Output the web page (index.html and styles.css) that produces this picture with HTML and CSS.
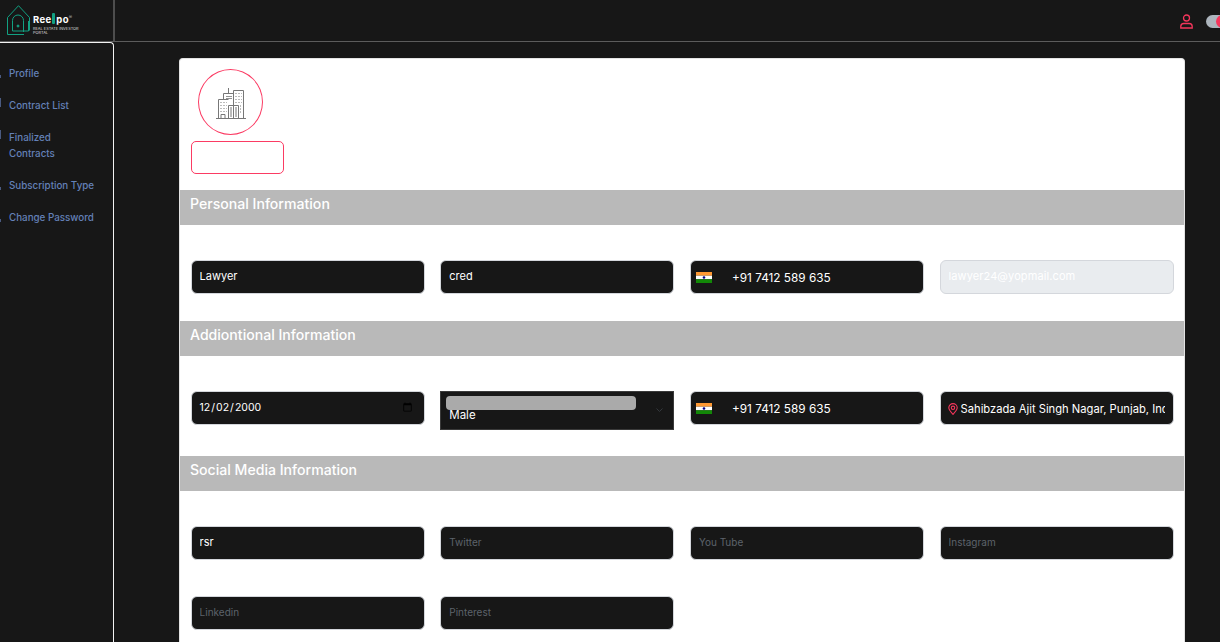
FILE: index.html
```html
<!DOCTYPE html>
<html lang="en">
<head>
<meta charset="utf-8">
<title>Reelpo - Profile</title>
<link rel="stylesheet" href="styles.css">
</head>
<body>
<header class="topbar">
  <div class="brand">
    <svg class="brand-mark" width="24" height="31" viewBox="0 0 24 31" fill="none" stroke="#12a182" stroke-width="1">
      <path d="M.5 12.500 11.500.7 22.500 12.500V25.500M.5 12.500V29.500H17"/>
      <path d="M5.500 26V15.500a5.500 5.500 0 0 1 11 0V27"/>
      <path d="M5.500 26H21.500V16"/>
      <circle cx="11" cy="21" r="1" fill="#12a182"/>
    </svg>
    <div class="brand-copy">
      <div class="brand-name">Ree<span class="brand-plug"></span>po<sup class="brand-reg">®</sup></div>
      <div class="brand-tag">REAL ESTATE INVESTOR<br>PORTAL</div>
    </div>
  </div>
  <div class="topbar-tools">
    <svg width="13" height="15" viewBox="0 0 13 15" fill="none" stroke="#f5365c" stroke-width="1.300">
      <circle cx="6.500" cy="4" r="3"/>
      <path d="M.8 14v-1.500a3 3 0 0 1 3-3h5.400a3 3 0 0 1 3 3V14Z"/>
    </svg>
    <div class="toggle"><span class="toggle-knob"></span></div>
  </div>
</header>
<div class="shell">
  <nav class="sidebar">
    <a class="nav-link"><span class="nav-mark mark-a"></span>Profile</a>
    <a class="nav-link"><span class="nav-mark mark-b"></span>Contract List</a>
    <a class="nav-link"><span class="nav-mark mark-b"></span>Finalized<br>Contracts</a>
    <a class="nav-link"><span class="nav-mark mark-a"></span>Subscription Type</a>
    <a class="nav-link"><span class="nav-mark mark-a"></span>Change Password</a>
  </nav>
  <main class="content">
    <section class="card">
      <div class="avatar-block">
        <div class="avatar">
          <svg width="30" height="33" viewBox="0 0 30 33" fill="none" stroke="#777" stroke-width="1">
            <path d="M0 32.500H30"/>
            <path d="M2.500 32V13.500H12.500"/>
            <path d="M7.500 13V7.500H17"/>
            <path d="M12.500 7V2"/>
            <path d="M17.500 32V4.500H27.500V32"/>
            <path d="M12.500 32V19.500H22.500V32"/>
            <path d="M15 21V31M17.500 21V31M20 21V31"/>
            <path d="M10 10.500H16M10 12.500H16" stroke-width=".8"/>
            <path stroke-dasharray="1 2" d="M4.500 16.500H11M4.500 19.500H11M4.500 22.500H11M4.500 25.500H11M19.500 7.500H26M19.500 10.500H26M19.500 13.500H26M19.500 16.500H26M24 20H26M24 23H26M24 26H26"/>
            <path d="M5 32v-3.500h4V32"/>
          </svg>
        </div>
        <div class="upload-box"></div>
      </div>

      <h2 class="band">Personal Information</h2>
      <div class="field-grid">
        <input class="field" type="text" value="Lawyer">
        <input class="field" type="text" value="cred">
        <div class="field phone">
          <svg class="flag" width="16" height="11" viewBox="0 0 16 11"><rect width="16" height="3.700" fill="#f93"/><rect y="3.700" width="16" height="3.600" fill="#fff"/><rect y="7.300" width="16" height="3.700" fill="#128807"/><circle cx="8" cy="5.500" r="1.300" fill="#008"/></svg>
          <span>+91 7412 589 635</span>
        </div>
        <input class="field field-disabled" type="text" value="lawyer24@yopmail.com" disabled>
      </div>

      <h2 class="band">Addiontional Information</h2>
      <div class="field-grid field-grid-select">
        <input class="field field-date" type="date" value="2000-12-02">
        <div class="gender">
          <span class="gender-highlight"></span>
          <span class="gender-value">Male</span>
          <svg class="gender-chevron" width="7" height="4" viewBox="0 0 7 4" fill="none" stroke="#34383d"><path d="M.5.500 3.500 3.500 6.500.500"/></svg>
        </div>
        <div class="field phone">
          <svg class="flag" width="16" height="11" viewBox="0 0 16 11"><rect width="16" height="3.700" fill="#f93"/><rect y="3.700" width="16" height="3.600" fill="#fff"/><rect y="7.300" width="16" height="3.700" fill="#128807"/><circle cx="8" cy="5.500" r="1.300" fill="#008"/></svg>
          <span>+91 7412 589 635</span>
        </div>
        <div class="field address">
          <svg width="10" height="12" viewBox="0 0 10 12" fill="none" stroke="#f5365c" stroke-width="1.100"><path d="M5 11.300C2.700 8.900.8 7 .8 4.800a4.200 4.200 0 0 1 8.400 0C9.200 7 7.300 8.900 5 11.300Z"/><circle cx="5" cy="4.800" r="1.700"/></svg>
          <input class="address-input" type="text" value="Sahibzada Ajit Singh Nagar, Punjab, India">
        </div>
      </div>

      <h2 class="band">Social Media Information</h2>
      <div class="field-grid">
        <input class="field" type="text" value="rsr">
        <input class="field" type="text" placeholder="Twitter">
        <input class="field" type="text" placeholder="You Tube">
        <input class="field" type="text" placeholder="Instagram">
        <input class="field" type="text" placeholder="Linkedin">
        <input class="field" type="text" placeholder="Pinterest">
      </div>
    </section>
  </main>
</div>
</body>
</html>
```
FILE: styles.css
```css
* { box-sizing: border-box; }
html, body { height: 642px; margin: 0; overflow: hidden; }
body { background: #171717; font-family: Inter, "Liberation Sans", sans-serif; }

.topbar {
  height: 42px;
  display: flex;
  align-items: stretch;
  justify-content: space-between;
  border-bottom: 1px solid #5c5c5c;
}
.brand {
  width: 115px;
  display: flex;
  align-items: flex-start;
  padding: 5px 0 0 7px;
  border-right: 2px solid #4d4d4d;
  gap: 2px;
}
.brand-copy { padding-top: 8px; color: #fff; }
.brand-name { font-size: 9.500px; font-weight: 700; line-height: 11px; letter-spacing: .3px; white-space: nowrap; }
.brand-plug { display: inline-block; width: 3px; height: 11px; margin: 0 1px; vertical-align: -1px; background: #12a182; border-radius: 1px; }
.brand-reg { font-size: 5px; font-weight: 400; line-height: 0; color: #aaa; }
.brand-tag { margin-top: 2px; font-size: 3.900px; line-height: 4px; color: #ddd; white-space: nowrap; }
.brand-mark { flex: none; }

.topbar-tools { display: flex; align-items: center; gap: 13px; padding-top: 1px; }
.toggle { width: 14px; height: 13px; position: relative; overflow: hidden; border-radius: 7px 0 0 7px; background: #adb5bd; }
.toggle-knob { position: absolute; left: 10px; top: 0; width: 13px; height: 13px; border-radius: 50%; background: #f5365c; }

.shell { display: flex; height: 600px; }
.sidebar {
  width: 114px;
  flex: none;
  padding-top: 23px;
  border-top: 1px solid #f2f2f2;
  border-right: 1px solid #f2f2f2;
  border-top-right-radius: 4px;
  display: flex;
  flex-direction: column;
  gap: 16px;
}
.nav-link {
  position: relative;
  display: block;
  padding-left: 9px;
  font-size: 9.800px;
  font-weight: 500;
  line-height: 16px;
  color: #6481b8;
  white-space: nowrap;
}
.nav-mark { position: absolute; left: 0; width: 1px; background: #4a5a80; }
.mark-a { top: 9px; height: 3px; }
.mark-b { top: 0; height: 9px; }

.content { flex: 1; padding: 16px 35px 0 65px; overflow: hidden; }
.card { background: #fff; border: 1px solid #e3e3e3; border-bottom: 0; border-radius: 4px 4px 0 0; height: 640px; }

.avatar-block { height: 131px; padding: 10px 0 0 11px; }
.avatar {
  width: 65px;
  height: 66px;
  margin-left: 7px;
  border: 1px solid #fb3b63;
  border-radius: 50%;
  display: flex;
  align-items: center;
  justify-content: center;
}
.upload-box { width: 93px; height: 33px; margin-top: 6px; border: 1px solid #fb3b63; border-radius: 5px; }

.band {
  height: 35px;
  margin: 0;
  padding: 5px 0 0 10px;
  background: #b9b9b9;
  color: #fff;
  font-size: 14.100px;
  font-weight: 500;
  line-height: 18px;
}
.field-grid {
  display: grid;
  grid-template-columns: repeat(4, 234px);
  column-gap: 15.670px;
  row-gap: 36px;
  align-items: start;
  padding: 35px 10px 27px 10.600px;
}
.field-grid-select { padding-bottom: 26px; }

.field {
  display: flex;
  align-items: center;
  width: 100%;
  height: 34px;
  padding: 0 8px;
  background: #171717;
  border: 1px solid #d4d7dc;
  border-radius: 6px;
  color: #fff;
  font-family: inherit;
  font-size: 11px;
  font-weight: 400;
  outline: none;
}
input.field { padding-bottom: 2px; }
.field::placeholder { color: #5d636b; font-size: 10px; font-weight: 400; }
.field-disabled { background: #e9ecef; border-color: #d4d7dc; color: #fff; letter-spacing: .1px; }
.field-date { display: block; padding: 0 9px 1px 7px; font-size: 10.500px; }
.phone { gap: 20px; padding: 1px 8px 0 5px; font-size: 11.800px; font-weight: 400; }
.flag { flex: none; }

.address { gap: 3px; padding: 1px 8px 0 7px; }
.address-input {
  flex: 1;
  min-width: 0;
  padding: 0;
  border: 0;
  outline: none;
  background: transparent;
  color: #fff;
  font-family: inherit;
  font-size: 11.200px;
  font-weight: 400;
}

.gender {
  position: relative;
  height: 39px;
  background: #171717;
  border: 1px solid #3a3a3a;
  color: #fff;
  font-size: 11.500px;
  font-weight: 400;
}
.gender-highlight { position: absolute; left: 5px; top: 4px; width: 190px; height: 14px; background: #aaa; border-radius: 4px; }
.gender-value { position: absolute; left: 8px; top: 16px; line-height: 14px; }
.gender-chevron { position: absolute; right: 10px; top: 16px; }
```
